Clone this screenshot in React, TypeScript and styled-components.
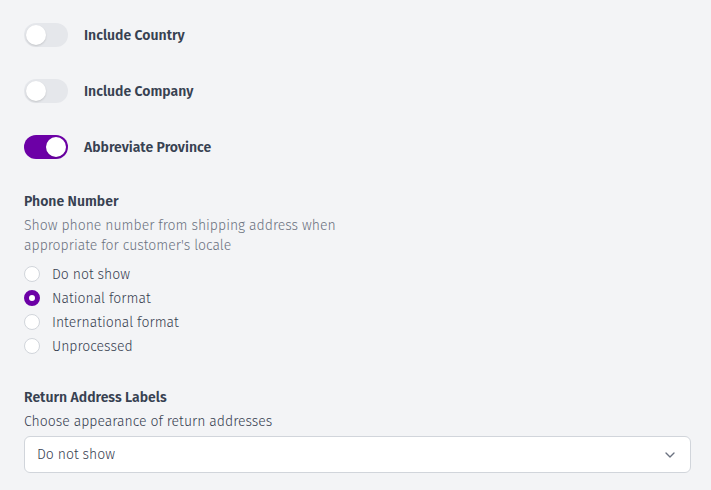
import styled, { createGlobalStyle } from 'styled-components';
import { ChevronDown } from 'lucide-react';

const PURPLE = '#6c00a6';

const GlobalStyle = createGlobalStyle`
    html, body {
        margin: 0;
        padding: 0;
        background: #f3f4f6;
    }
    body {
        font-family: "Fira Sans", "Noto Sans", "Open Sans", sans-serif;
        color: #374151;
    }
`;

const Page = styled.div`
    padding: 23px 20px 0 24px;
    display: flex;
    flex-direction: column;
`;

const ToggleRow = styled.label`
    display: flex;
    align-items: center;
    gap: 16px;
    height: 24px;
    margin-bottom: 32px;
`;

const Track = styled.span<{ $on: boolean }>`
    position: relative;
    width: 44px;
    height: 24px;
    border-radius: 12px;
    background: ${p => (p.$on ? PURPLE : '#e5e7eb')};
    flex-shrink: 0;
`;

const Knob = styled.span<{ $on: boolean }>`
    position: absolute;
    top: 2px;
    left: ${p => (p.$on ? '22px' : '2px')};
    width: 20px;
    height: 20px;
    border-radius: 50%;
    background: #fff;
    box-shadow: 0 1px 2px rgba(0, 0, 0, 0.15);
`;

const ToggleLabel = styled.span`
    font-size: 14px;
    font-weight: 600;
    color: #374151;
`;

const Section = styled.div<{ $gap?: number }>`
    display: flex;
    flex-direction: column;
    margin-top: ${p => p.$gap ?? 0}px;
`;

const Heading = styled.div`
    font-size: 14px;
    font-weight: 600;
    line-height: 20px;
    color: #374151;
    margin-top: 1px;
    margin-bottom: 4px;
`;

const Description = styled.div<{ $dark?: boolean }>`
    font-size: 14px;
    font-weight: 300;
    line-height: 20px;
    color: ${p => (p.$dark ? '#374151' : '#6b7280')};
    max-width: 320px;
    margin-bottom: ${p => (p.$dark ? 4 : 6)}px;
`;

const RadioList = styled.div`
    display: flex;
    flex-direction: column;
`;

const RadioRow = styled.label`
    display: flex;
    align-items: center;
    gap: 12px;
    height: 24px;
    font-size: 14px;
    font-weight: 300;
    color: #374151;
`;

const RadioDot = styled.span<{ $checked: boolean }>`
    box-sizing: border-box;
    width: 16px;
    height: 16px;
    border-radius: 50%;
    background: #fff;
    border: ${p => (p.$checked ? `5px solid ${PURPLE}` : '1px solid #d1d5db')};
`;

const Select = styled.div`
    box-sizing: border-box;
    height: 37px;
    width: 667px;
    background: #fff;
    border: 1px solid #d1d5db;
    border-radius: 6px;
    display: flex;
    align-items: center;
    justify-content: space-between;
    padding: 0 12px 0 12px;
    font-size: 14px;
    font-weight: 300;
    color: #374151;
`;

const toggles = [
    { label: 'Include Country', on: false },
    { label: 'Include Company', on: false },
    { label: 'Abbreviate Province', on: true },
];

const phoneOptions = ['Do not show', 'National format', 'International format', 'Unprocessed'];

export default function App() {
    return (
        <>
            <GlobalStyle />
            <Page>
                {toggles.map(t => (
                    <ToggleRow key={t.label}>
                        <Track $on={t.on}>
                            <Knob $on={t.on} />
                        </Track>
                        <ToggleLabel>{t.label}</ToggleLabel>
                    </ToggleRow>
                ))}

                <Section>
                    <Heading>Phone Number</Heading>
                    <Description>
                        Show phone number from shipping address when appropriate for customer's locale
                    </Description>
                    <RadioList>
                        {phoneOptions.map(o => (
                            <RadioRow key={o}>
                                <RadioDot $checked={o === 'National format'} />
                                {o}
                            </RadioRow>
                        ))}
                    </RadioList>
                </Section>

                <Section $gap={29}>
                    <Heading>Return Address Labels</Heading>
                    <Description $dark>Choose appearance of return addresses</Description>
                    <Select>
                        <span>Do not show</span>
                        <ChevronDown size={16} color="#6b7280" strokeWidth={2} />
                    </Select>
                </Section>
            </Page>
        </>
    );
}
